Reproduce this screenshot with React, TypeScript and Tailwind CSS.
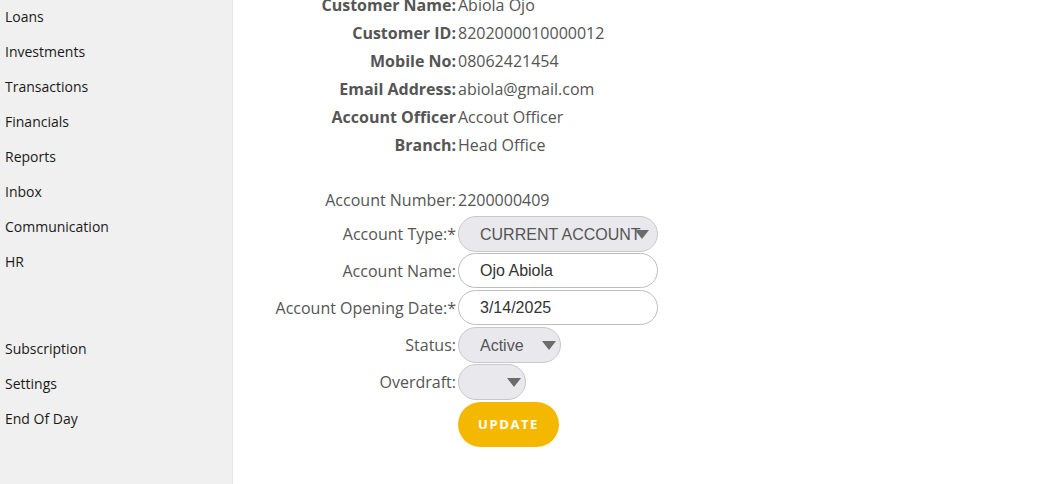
import React from "react";

const navTop = ["Loans", "Investments", "Transactions", "Financials", "Reports", "Inbox", "Communication", "HR"];
const navBottom = ["Subscription", "Settings", "End Of Day"];

const customer: [string, string][] = [
  ["Customer Name:", "Abiola Ojo"],
  ["Customer ID:", "8202000010000012"],
  ["Mobile No:", "08062421454"],
  ["Email Address:", "abiola@gmail.com"],
  ["Account Officer", "Accout Officer"],
  ["Branch:", "Head Office"],
];

function SelectBox({ width, text, arrowRight }: { width: number; text: string; arrowRight: number }) {
  return (
    <div
      className="relative h-[36px] rounded-full border border-[#c8c8cc] bg-[#e9e9ed] flex items-center pl-[21px] pt-[2px] overflow-hidden whitespace-nowrap text-[16px] text-[#555]"
      style={{ width, fontFamily: '"Liberation Sans", Arial, sans-serif' }}
    >
      {text}
      <svg className="absolute top-1/2 -translate-y-1/2" style={{ right: arrowRight }} width="14" height="10" viewBox="0 0 14 10">
        <path d="M0 1 L14 1 L7 10 Z" fill="#6b6b6b" />
      </svg>
    </div>
  );
}

function InputBox({ text }: { text: string }) {
  return (
    <div
      className="h-[35px] w-[200px] rounded-full border border-[#bdbdbd] bg-white flex items-center pl-[21px] text-[16px] text-[#333]"
      style={{ fontFamily: '"Liberation Sans", Arial, sans-serif' }}
    >
      {text}
    </div>
  );
}

const labelCls = "w-[225px] text-right pr-[2px]";

export default function App() {
  return (
    <div className="flex w-[1056px] h-[484px] overflow-hidden bg-white" style={{ fontFamily: '"Open Sans", sans-serif' }}>
      <aside className="w-[233px] shrink-0 bg-[#f0f0f0] border-r border-[#e6e6e6] text-[14px] text-[#1a1a1a] pt-[0px]">
        <div className="mt-[-1px]">
          {navTop.map((n) => (
            <div key={n} className="h-[35px] flex items-center pl-[5px]">{n}</div>
          ))}
        </div>
        <div className="h-[52px]" />
        {navBottom.map((n) => (
          <div key={n} className="h-[35px] flex items-center pl-[5px]">{n}</div>
        ))}
      </aside>
      <main className="flex-1 mt-[-9px] text-[16px] text-[#555]">
        {customer.map(([l, v]) => (
          <div key={l} className="flex h-[28px] items-center">
            <div className={labelCls + " font-bold"}>{l}</div>
            <div>{v}</div>
          </div>
        ))}
        <div className="h-[27px]" />
        <div className="flex h-[28px] items-center">
          <div className={labelCls}>Account Number:</div>
          <div>2200000409</div>
        </div>
        <div className="flex items-center mt-[2px] h-[36px]">
          <div className={labelCls}>Account Type:*</div>
          <SelectBox width={200} text="CURRENT ACCOUNT" arrowRight={8} />
        </div>
        <div className="flex items-center mt-[1px]">
          <div className={labelCls}>Account Name:</div>
          <InputBox text="Ojo Abiola" />
        </div>
        <div className="flex items-center mt-[2px]">
          <div className={labelCls}>Account Opening Date:*</div>
          <InputBox text="3/14/2025" />
        </div>
        <div className="flex items-center mt-[2px]">
          <div className={labelCls}>Status:</div>
          <SelectBox width={103} text="Active" arrowRight={4} />
        </div>
        <div className="flex items-center mt-[1px]">
          <div className={labelCls}>Overdraft:</div>
          <SelectBox width={68} text="" arrowRight={4} />
        </div>
        <div className="flex mt-[2px]">
          <div className="w-[225px]" />
          <button className="w-[101px] h-[45px] rounded-full bg-[#f5b800] text-white font-bold text-[13px] tracking-[1.6px]">
            UPDATE
          </button>
        </div>
      </main>
    </div>
  );
}
